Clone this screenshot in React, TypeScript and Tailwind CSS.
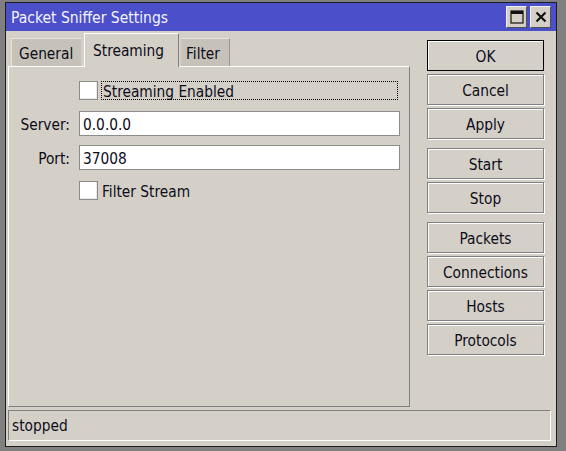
import { FC } from "react";

const ui = "font-['DejaVu_Sans_Condensed','DejaVu_Sans',sans-serif] text-[15.3px] text-[#0c0c18]";

// text sits a touch low in the original renderer
const T: FC<{ children: React.ReactNode }> = ({ children }) => (
  <span className="translate-y-[2px]">{children}</span>
);

const Btn: FC<{ label: string; primary?: boolean }> = ({ label, primary }) => (
  <button
    className={`h-[31px] w-full bg-[#d4d0c8] flex items-center justify-center ${
      primary
        ? "border border-black shadow-[inset_1px_1px_0_#fff]"
        : "border border-[#808080] shadow-[inset_1px_1px_0_#fff,1px_1px_0_#fff]"
    }`}
  >
    <T>{label}</T>
  </button>
);

const CheckBox: FC<{ label: string; focused?: boolean }> = ({ label, focused }) => (
  <div className="flex items-center h-[19px] ml-[70px]">
    <div className="w-[19px] h-[19px] bg-white border border-[#8c8c8c] shadow-[inset_-1px_-1px_0_#e8e8e8]" />
    <div
      className={`ml-[3px] h-[19px] flex items-center pl-[1px] ${
        focused ? "w-[297px] border border-dotted border-black" : ""
      }`}
    >
      <T>{label}</T>
    </div>
  </div>
);

const Field: FC<{ label: string; value: string }> = ({ label, value }) => (
  <div className="flex items-center h-[25px]">
    <div className="w-[61px] flex justify-end">
      <T>{label}</T>
    </div>
    <div className="ml-[9px] w-[321px] h-[25px] bg-white border border-[#8c8c8c] flex items-center pl-[3px]">
      <T>{value}</T>
    </div>
  </div>
);

export default function App() {
  return (
    <div className={`w-[566px] h-[451px] bg-[#808080] pl-[5px] pt-[2px] ${ui}`}>
      <div className="w-[552px] h-[445px] border border-[#1e1e1e] bg-[#d4d0c8] flex flex-col">
        {/* title bar */}
        <div className="h-[28px] bg-[#4b4fca] flex items-center pl-[5px] pr-[5px]">
          <span className="text-[15.5px] text-[#f4f4ff] flex-1 translate-y-[2px]">Packet Sniffer Settings</span>
          <div className="w-[21px] h-[22px] bg-[#d4d0c8] border border-[#f0f0f0] border-r-[#505050] border-b-[#505050] flex items-center justify-center">
            <svg width="14" height="14" viewBox="0 0 14 14">
              <rect x="1" y="1" width="12" height="12" fill="none" stroke="#111" strokeWidth="1.2" />
              <rect x="1" y="1" width="12" height="3" fill="#111" />
            </svg>
          </div>
          <div className="ml-[3px] w-[21px] h-[22px] bg-[#d4d0c8] border border-[#f0f0f0] border-r-[#505050] border-b-[#505050] flex items-center justify-center">
            <svg width="12" height="12" viewBox="0 0 12 12">
              <path d="M1.5 1.5 L10.5 10.5 M10.5 1.5 L1.5 10.5" stroke="#111" strokeWidth="2.2" />
            </svg>
          </div>
        </div>

        {/* body */}
        <div className="flex-1 flex flex-col pl-[2px] pt-[2px]">
          <div className="flex">
            <div className="w-[402px] flex flex-col">
              {/* tabs */}
              <div className="flex items-end h-[33px] pl-[3px]">
                <div className="w-[70px] h-[28px] bg-[#c6c2ba] border-t border-l border-[#e6e3dd] flex items-center pl-[7px]">
                  <T>General</T>
                </div>
                <div className="ml-[3px] w-[95px] h-[34px] -mb-px relative z-10 bg-[#d4d0c8] border-t border-l border-white border-r border-r-[#808080] flex items-center pl-[8px] pb-[3px]">
                  <T>Streaming</T>
                </div>
                <div className="ml-[2px] w-[49px] h-[28px] bg-[#c6c2ba] border-t border-[#e6e3dd] border-r border-r-[#9a968f] flex items-center pl-[5px]">
                  <T>Filter</T>
                </div>
              </div>
              {/* panel */}
              <div className="h-[341px] border border-white border-r-[#808080] border-b-[#808080] pt-[14px] flex flex-col">
                <CheckBox label="Streaming Enabled" focused />
                <div className="mt-[11px]">
                  <Field label="Server:" value="0.0.0.0" />
                </div>
                <div className="mt-[9px]">
                  <Field label="Port:" value="37008" />
                </div>
                <div className="mt-[11px]">
                  <CheckBox label="Filter Stream" />
                </div>
              </div>
            </div>

            {/* buttons */}
            <div className="ml-[17px] w-[117px] pt-[7px] flex flex-col">
              <div className="flex flex-col gap-[3px]">
                <Btn label="OK" primary />
                <Btn label="Cancel" />
                <Btn label="Apply" />
              </div>
              <div className="mt-[9px] flex flex-col gap-[3px]">
                <Btn label="Start" />
                <Btn label="Stop" />
              </div>
              <div className="mt-[9px] flex flex-col gap-[3px]">
                <Btn label="Packets" />
                <Btn label="Connections" />
                <Btn label="Hosts" />
                <Btn label="Protocols" />
              </div>
            </div>
          </div>

          {/* status bar */}
          <div className="mt-[3px] w-[543px] h-[31px] border border-[#808080] border-r-white border-b-white flex items-center pl-[3px]">
            <span className="translate-y-[1px]">stopped</span>
          </div>
        </div>
      </div>
    </div>
  );
}
